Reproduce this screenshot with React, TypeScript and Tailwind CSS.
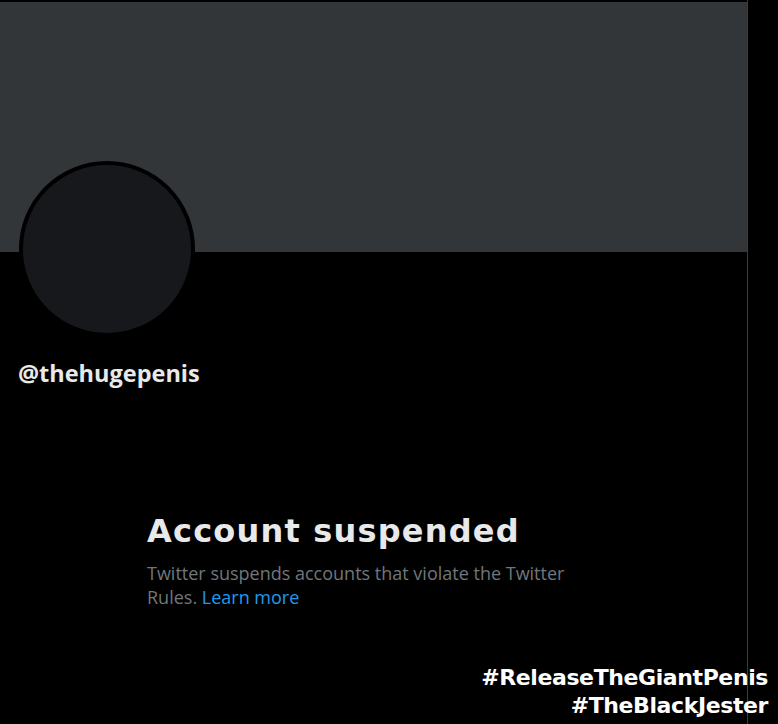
export default function App() {
  return (
    <div className="relative w-[778px] h-[724px] bg-black overflow-hidden font-['Open_Sans','Liberation_Sans',sans-serif]">
      <div className="w-[748px] h-full border-r border-[#3a3d40] pt-[2px]">
        {/* Banner */}
        <div className="h-[250px] bg-[#333639]" />

        {/* Avatar */}
        <div className="-mt-[91px] ml-[19px] w-[176px] h-[176px] rounded-full border-4 border-black bg-[#16181c]" />

        {/* Handle */}
        <div className="mt-[20px] ml-[18px] text-[23.5px] leading-[32px] font-bold text-[#e7e9ea]">
          @thehugepenis
        </div>

        {/* Suspended notice */}
        <div className="mt-[120px] ml-[147px] w-[440px]">
          <h1 className="text-[32px] leading-[44px] font-bold text-[#e7e9ea] font-['DejaVu_Sans',sans-serif] tracking-[1.2px]">
            Account suspended
          </h1>
          <p className="mt-[8px] text-[18px] leading-[24px] text-[#71767b]">
            Twitter suspends accounts that violate the Twitter Rules.{" "}
            <span className="text-[#1d9bf0]">Learn more</span>
          </p>
        </div>
      </div>

      {/* Hashtag overlay */}
      <div className="absolute right-[10px] bottom-[4px] text-right text-white font-bold text-[22px] leading-[28px] font-['DejaVu_Sans',sans-serif] tracking-[-0.4px]">
        <div>#ReleaseTheGiantPenis</div>
        <div>#TheBlackJester</div>
      </div>
    </div>
  )
}
